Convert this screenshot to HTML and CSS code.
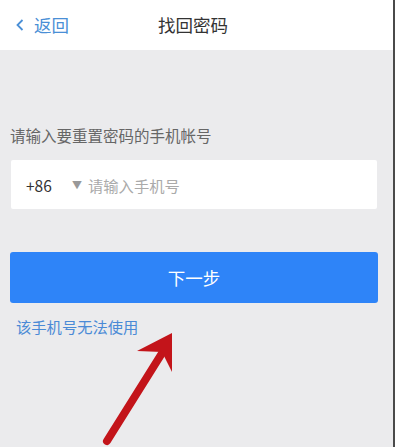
FILE: index.html
```html
<!DOCTYPE html>
<html lang="zh-CN">
<head>
<meta charset="utf-8">
<title>找回密码</title>
<link rel="stylesheet" href="styles.css">
</head>
<body>
<div class="app">
  <header class="topbar">
    <div class="back">
      <svg class="chev" width="8" height="12" viewBox="0 0 8 12"><polyline points="6.5,1 1.5,6 6.5,11" fill="none" stroke="#4a8fd6" stroke-width="1.8"/></svg>
      <span>返回</span>
    </div>
    <div class="title">找回密码</div>
    <div></div>
  </header>
  <main class="content">
    <p class="label">请输入要重置密码的手机帐号</p>
    <div class="field">
      <span class="code">+86</span>
      <span class="tri">▼</span>
      <span class="ph">请输入手机号</span>
    </div>
    <button class="next">下一步</button>
    <a class="link">该手机号无法使用</a>
  </main>
  <svg class="arrow" width="395" height="447" viewBox="0 0 395 447">
    <line x1="107" y1="441" x2="164" y2="350" stroke="#c3141a" stroke-width="8" stroke-linecap="round"/>
    <polygon points="172,333 137,351 162,352 172,372" fill="#c3141a"/>
  </svg>
</div>
</body>
</html>
```
FILE: styles.css
```css
html, body { margin: 0; padding: 0; }
body {
  font-family: "Noto Sans CJK SC", "Noto Sans", sans-serif;
  background: #ebebed;
}
.app {
  position: relative;
  width: 393px;
  height: 447px;
  background: #ebebed;
  border-right: 2px solid #4a4a4a;
  overflow: hidden;
}
.topbar {
  height: 50px;
  background: #fff;
  display: grid;
  grid-template-columns: 1fr auto 1fr;
  align-items: center;
  padding: 0 23px 0 16px;
}
.back {
  display: flex;
  align-items: center;
  gap: 10px;
  color: #4a8fd6;
  font-size: 17.5px;
  line-height: 1;
}
.chev { display: block; }
.title {
  font-size: 17.5px;
  color: #333;
  line-height: 1;
}
.content {
  padding: 0 15px 0 10px;
  display: flex;
  flex-direction: column;
}
.label {
  margin: 74px 0 0 0;
  font-size: 15.5px;
  line-height: 22px;
  color: #666;
}
.field {
  margin: 14px 1px 0 1px;
  height: 49px;
  background: #fff;
  border-radius: 2px;
  display: flex;
  align-items: center;
  padding-left: 15px;
}
.code {
  font-size: 15.5px;
  color: #333;
  width: 46px;
}
.tri {
  font-size: 10px;
  color: #999;
  margin-right: 6px;
}
.ph {
  font-size: 15.3px;
  color: #aaa;
}
.next {
  margin-top: 43px;
  height: 51px;
  border: none;
  border-radius: 3px;
  background: #2e84f8;
  color: #fff;
  font-family: inherit;
  font-size: 17.5px;
  padding: 0;
}
.link {
  margin: 13px 0 0 6px;
  font-size: 15.3px;
  line-height: 20px;
  color: #4a8ad6;
}
.arrow {
  position: absolute;
  left: 0;
  top: 0;
  pointer-events: none;
}
```
